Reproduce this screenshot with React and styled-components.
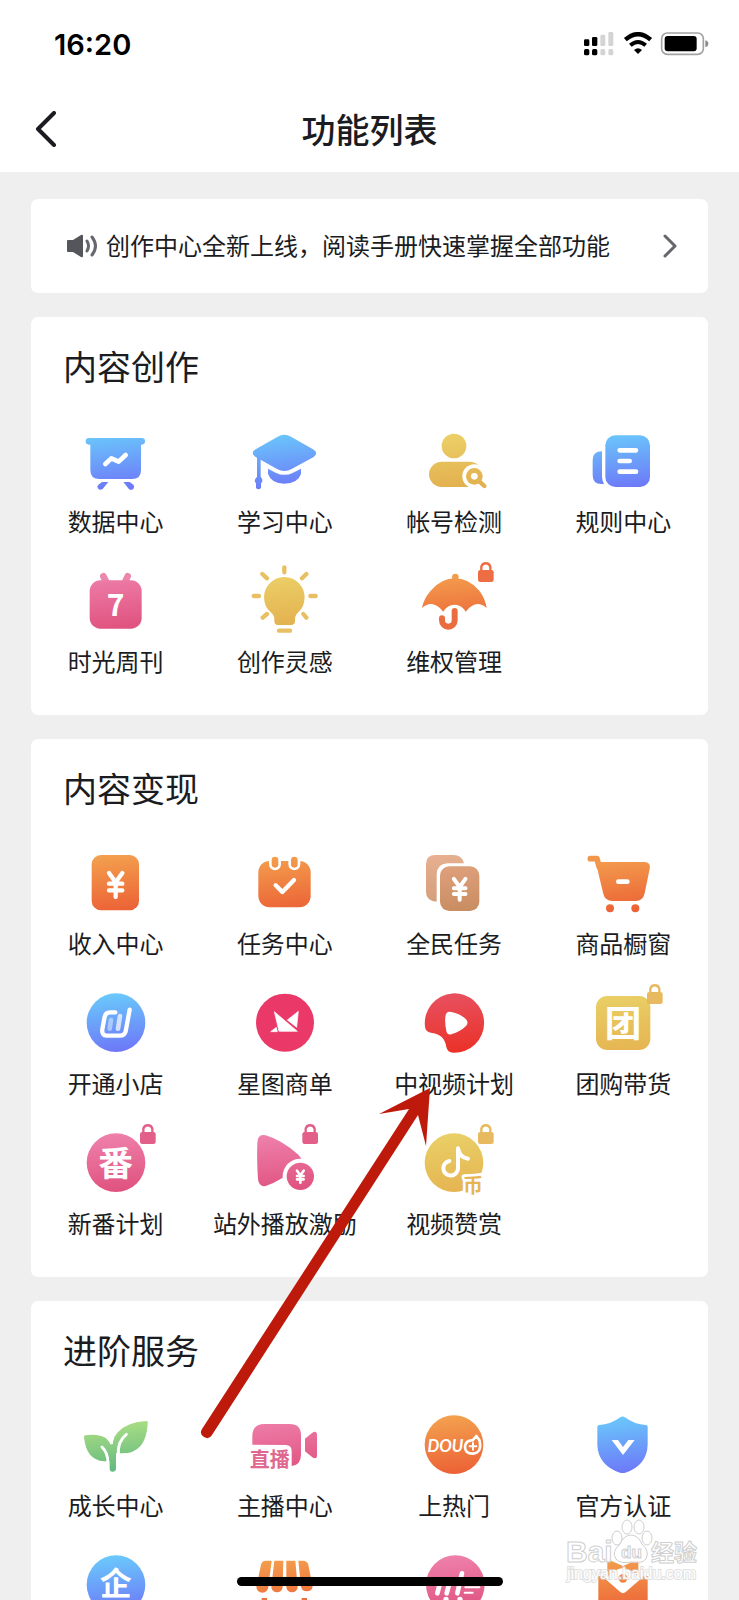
import React from 'react'
import styled, { createGlobalStyle } from 'styled-components'

const GlobalStyle = createGlobalStyle`
  * {
    box-sizing: border-box;
  }

  body {
    margin: 0;
    background-color: #efefef;
    color: #1b1c22;
    font-family: 'Noto Sans CJK SC', 'Noto Sans', sans-serif;
  }

  button {
    border: 0;
    padding: 0;
    background: none;
    color: inherit;
    font: inherit;
    cursor: pointer;
  }
`

const StyledScreen = styled.div`
  position: relative;
  display: flex;
  flex-direction: column;
  height: 100vh;
  overflow: hidden;
`

const StyledHeader = styled.header`
  flex: none;
  background-color: #ffffff;
`

const StyledStatusBar = styled.div`
  display: flex;
  align-items: center;
  justify-content: space-between;
  height: 88px;
  padding: 0 30px 0 54px;
`

const StyledTime = styled.time`
  color: #000000;
  font-family: Inter, 'Liberation Sans', sans-serif;
  font-size: 29px;
  font-weight: 600;
`

const StyledStatusIcons = styled.svg`
  width: 125px;
  height: 24px;
`

const StyledNav = styled.nav`
  display: grid;
  grid-template-columns: 60px 1fr 60px;
  align-items: center;
  height: 84px;
  padding: 0 30px 2px;
`

const StyledBack = styled.button`
  display: flex;
  padding-left: 4px;
`

const StyledPageTitle = styled.h1`
  margin: 0;
  font-size: 34px;
  font-weight: 500;
  line-height: 40px;
  text-align: center;
`

const StyledMain = styled.main`
  display: flex;
  flex: 1;
  flex-direction: column;
  gap: 24px;
  min-height: 0;
  padding: 27px 31px;
  overflow-y: auto;
  scrollbar-width: none;
`

const StyledNotice = styled.button`
  && {
    display: flex;
    flex: none;
    align-items: center;
    height: 94px;
    padding: 0 30px 0 35px;
    border-radius: 7px;
    background-color: #ffffff;
    font-size: 24px;
    text-align: left;
  }
`

const StyledNoticeText = styled.span`
  flex: 1;
  padding: 0 0 2px 8px;
  line-height: 32px;
  white-space: nowrap;
`

const StyledCard = styled.section`
  flex: none;
  padding: 29px 0 38px;
  border-radius: 7px;
  background-color: #ffffff;
`

const StyledCardTitle = styled.h2`
  margin: 0 0 38px;
  padding: 0 32px;
  font-size: 34px;
  font-weight: 400;
  line-height: 40px;
`

const StyledGrid = styled.div`
  display: grid;
  grid-template-columns: repeat(4, 1fr);
  row-gap: 27px;
`

const StyledEntry = styled.button`
  display: flex;
  flex-direction: column;
  align-items: center;
  gap: 9px;
`

const StyledIcon = styled.svg`
  width: 80px;
  height: 72px;
  overflow: visible;

  text {
    font-family: 'Noto Sans CJK SC', sans-serif;
    font-weight: 700;
    text-anchor: middle;
  }
`

const StyledLabel = styled.span`
  min-height: 32px;
  font-size: 24px;
  line-height: 32px;
  white-space: nowrap;
`

const StyledArrow = styled.svg`
  position: absolute;
  top: 1088px;
  left: 200px;
  width: 232px;
  height: 352px;
  pointer-events: none;
`

const StyledHomeBar = styled.div`
  position: absolute;
  bottom: 14px;
  left: 50%;
  width: 36%;
  height: 9px;
  border-radius: 5px;
  background-color: #000000;
  transform: translateX(-50%);
`

const StyledWatermark = styled.svg`
  position: absolute;
  right: 36px;
  bottom: 14px;
  width: 140px;
  height: 68px;
  pointer-events: none;
`

const colors = {
  blue: ['#6ac8fb', '#6d78f8'],
  yellow: ['#ecd068', '#e2b04e'],
  gold: ['#e9cf66', '#e6b552'],
  pink: ['#ee80aa', '#e0527f'],
  orange: ['#f3a04e', '#ec6236'],
  brown: ['#e3a582', '#c98d62'],
  green: ['#b4e385', '#5fb77f'],
  red: ['#e8505f', '#ea3229']
}

const stroke = (color, width) => ({
  fill: 'none',
  stroke: color,
  strokeWidth: width,
  strokeLinecap: 'round',
  strokeLinejoin: 'round'
})

const Gradients = () => (
  <svg width="0" height="0" style={{ position: 'absolute' }} aria-hidden="true">
    <defs>
      {Object.entries(colors).map(([name, [from, to]]) => (
        <linearGradient key={name} id={name} gradientUnits="userSpaceOnUse" x1="110" y1="25" x2="130" y2="195">
          <stop offset="0" stopColor={from} />
          <stop offset="1" stopColor={to} />
        </linearGradient>
      ))}
    </defs>
  </svg>
)

const Lock = ({ color, x = 192 }) => (
  <g opacity="0.92">
    <rect x={x} y="18" width="47" height="36" rx="7" fill={colors[color][1]} />
    <path d={`M${x + 10} 22 V8 a14 14 0 0 1 27 0 V22`} {...stroke(colors[color][1], 7)} />
  </g>
)

const Disc = ({ color, x = 120 }) => <circle cx={x} cy="110" r="88" fill={`url(#${color})`} />

const Yen = ({ x, y, size, width }) => (
  <path
    d={`M${x - size * 5} ${y - size * 9} L${x} ${y - size * 2} L${x + size * 5} ${y - size * 9} M${x} ${y - size * 2} V${y + size * 9} M${x - size * 5} ${y - size} H${x + size * 5} M${x - size * 5} ${y + size * 4} H${x + size * 5}`}
    {...stroke('#fff', width)}
  />
)

const icons = {
  board: (
    <g fill="url(#blue)">
      <rect x="29" y="42" width="178" height="20" rx="10" />
      <path d="M43 48 H195 V138 Q195 165 168 165 H70 Q43 165 43 138 Z" />
      <path d="M78 174 H97 L80 195 Q70 201 65 192 Q62 187 67 182 Z" />
      <path d="M142 174 H161 L172 182 Q177 187 172 194 Q166 201 158 194 Z" />
      <path d="M88 120 L106 103 L128 113 L149 93" {...stroke('#fff', 14)} />
    </g>
  ),
  cap: (
    <g fill="url(#blue)">
      <path d="M32 76 L98 38 Q118 27 138 38 L204 76 Q222 87 206 99 L140 135 Q118 147 96 135 L32 99 Q14 87 32 76 Z" />
      <path d="M69 134 L92 146 Q118 159 144 146 L168 134 V150 Q158 179 118 179 Q79 179 69 150 Z" />
      <path d="M36 94 H47 V158 Q57 170 48 178 V192 Q40 200 33 192 V178 Q24 170 36 158 Z" />
    </g>
  ),
  account: (
    <g fill="url(#yellow)">
      <circle cx="120" cy="66" r="37" />
      <rect x="45" y="113" width="160" height="76" rx="38" />
      <circle cx="181" cy="157" r="36" fill="#fff" />
      <rect x="181" y="157" width="40" height="36" fill="#fff" />
      <path d="M196 172 L211 186" {...stroke('#e2b04e', 13)} />
      <circle cx="181" cy="157" r="25" />
      <circle cx="181" cy="157" r="10" fill="#fff" />
    </g>
  ),
  rules: (
    <g fill="url(#blue)">
      <path d="M57 82 V158 Q58 172 63 180 H55 Q29 180 29 154 V108 Q29 82 57 82 Z" />
      <rect x="67" y="34" width="134" height="155" rx="30" />
      <path d="M110 79 H159 M110 111 H140 M110 143 H159" {...stroke('#fff', 14)} />
    </g>
  ),
  weekly: (
    <g fill="url(#pink)">
      <path d="M82 37 L92 56 M155 37 L146 56" {...stroke('#ea87ad', 20)} />
      <rect x="41" y="49" width="156" height="145" rx="32" />
      <text x="119" y="156" fontSize="90" fill="#fff">7</text>
    </g>
  ),
  bulb: (
    <g fill="url(#yellow)">
      <path d="M57 100 A61 61 0 1 1 179 100 Q178 130 160 145 Q150 154 150 166 V172 Q150 183 138 183 H99 Q88 183 88 172 V166 Q88 154 77 145 Q58 130 57 100 Z" />
      <path
        d="M102 200 H135 M118 10 V25 M52 30 L66 43 M184 30 L171 43 M26 96 H42 M196 96 H212 M66 150 L53 161 M175 150 L184 161"
        {...stroke('#e8c063', 13)}
      />
    </g>
  ),
  umbrella: (
    <g fill="url(#orange)">
      <circle cx="124" cy="39" r="10" />
      <path d="M24 132 Q29 104 50 80 Q82 43 123 43 Q164 43 196 80 Q214 104 218 132 Q186 104 155 143 Q143 122 122 122 Q100 122 88 143 Q56 104 24 132 Z" />
      <path d="M122 137 V169 A19 19 0 0 1 84 169 V163" {...stroke('#fff', 28)} />
      <path d="M122 141 V169 A19 19 0 0 1 84 169 V163" {...stroke('#ea6d40', 18)} />
      <Lock color="orange" />
    </g>
  ),
  income: (
    <g fill="url(#orange)">
      <rect x="47" y="27" width="142" height="166" rx="28" />
      <Yen x={119} y={117} size={4} width={13} />
    </g>
  ),
  task: (
    <g fill="url(#orange)">
      <rect x="40" y="45" width="157" height="139" rx="34" />
      <rect x="76" y="28" width="28" height="41" rx="14" stroke="#fff" strokeWidth="8" />
      <rect x="134" y="28" width="28" height="41" rx="14" stroke="#fff" strokeWidth="8" />
      <path d="M92 118 L112 138 L147 102" {...stroke('#fff', 13)} />
    </g>
  ),
  tasks: (
    <g fill="url(#brown)">
      <path d="M64 27 H118 Q144 27 150 52 H100 Q68 54 68 86 V167 Q36 164 36 137 V55 Q36 27 64 27 Z" opacity="0.88" />
      <rect x="78" y="61" width="118" height="134" rx="28" />
      <Yen x={137} y={130} size={3.5} width={12} />
    </g>
  ),
  cart: (
    <g fill="url(#orange)">
      <path d="M22 38 H42 L48 62" {...stroke('#f2964b', 17)} />
      <path d="M46 48 H184 Q204 48 200 68 L185 142 Q180 165 158 165 H89 Q66 165 61 144 L40 56 Z" />
      <path d="M106 107 H133" {...stroke('#fff', 14)} />
      <circle cx="81" cy="187" r="12" />
      <circle cx="157" cy="187" r="12" />
    </g>
  ),
  shop: (
    <g>
      <Disc color="blue" />
      <path d="M118 79 H101 Q89 79 86 92 L79 130 Q77 148 92 149 H132 Q146 149 149 136 L161 71" {...stroke('#fff', 13)} />
      <path d="M105 102 L101 128" {...stroke('#fff', 14)} opacity="0.45" />
      <path d="M132 90 L126 128" {...stroke('#fff', 14)} opacity="0.7" />
    </g>
  ),
  star: (
    <g fill="#fff" stroke="#fff" strokeWidth="2" strokeLinejoin="round">
      <circle cx="120" cy="110" r="87" fill="#ea3968" stroke="none" />
      <path d="M88 77 L157 136 H102 Z" />
      <path d="M77 137 L94 124 L97 137 Z" />
      <path d="M160 76 L155 124 L127 102 Z" />
    </g>
  ),
  video: (
    <g fill="url(#red)">
      <path d="M33 122 A89 89 0 1 1 118 200 Q100 200 97 183 Q92 146 54 141 Q34 138 33 122 Z" />
      <path d="M94 92 Q96 74 112 78 Q140 84 156 100 Q165 110 156 120 Q140 136 112 145 Q100 148 97 135 Q92 112 94 92 Z" fill="#fff" />
    </g>
  ),
  group: (
    <g fill="url(#gold)">
      <rect x="39" y="30" width="163" height="162" rx="34" />
      <text x="120" y="153" fontSize="110" fill="#fff">团</text>
      <Lock color="gold" />
    </g>
  ),
  anime: (
    <g>
      <Disc color="pink" />
      <text x="119" y="149" fontSize="104" fill="#fff">番</text>
      <Lock color="pink" />
    </g>
  ),
  playback: (
    <g fill="url(#pink)">
      <path d="M37 50 Q38 22 62 28 Q110 42 160 86 Q178 104 162 118 Q110 165 62 180 Q42 184 39 160 Q35 100 37 50 Z" />
      <circle cx="166" cy="151" r="53" fill="#fff" />
      <circle cx="166" cy="151" r="41" />
      <Yen x={166} y={152} size={2} width={8} />
      <Lock color="pink" x={172} />
    </g>
  ),
  reward: (
    <g>
      <Disc color="gold" />
      <path d="M132 67 V126 A22 22 0 1 1 106 105 M132 67 Q136 94 162 98" {...stroke('#fff', 12)} />
      <text x="177" y="202" fontSize="60" fill="#e6b552" stroke="#fff" strokeWidth="16" strokeLinejoin="round" paintOrder="stroke">
        币
      </text>
      <Lock color="gold" />
    </g>
  ),
  sprout: (
    <g fill="url(#green)">
      <path d="M211 39 Q217 39 215 47 Q210 137 137 136 H116 Q102 98 124 74 Q154 41 211 39 Z" />
      <path d="M28 82 Q92 74 104 112 L104 160 H84 Q30 156 24 87 Q23 82 28 82 Z" />
      <path d="M78 117 Q96 134 96 166" {...stroke('#fff', 9)} />
      <path d="M127 142 Q124 100 151 79" {...stroke('#fff', 9)} />
      <path d="M100 112 Q112 104 120 112 V182 Q119 191 110 191 Q101 191 101 182 Z" />
    </g>
  ),
  live: (
    <g fill="url(#pink)">
      <path d="M22 110 V84 Q22 48 58 48 H134 Q168 48 168 82 V140 Q168 170 140 174 V130 Q140 111 122 111 Z" />
      <path d="M180 92 L202 74 Q216 66 216 82 V142 Q216 156 202 148 L180 130 Z" />
      <text x="74" y="178" fontSize="60" fill="#df6790">直播</text>
    </g>
  ),
  dou: (
    <g>
      <Disc color="orange" />
      <text
        x="94"
        y="132"
        fontSize="50"
        fill="#fff"
        style={{ fontFamily: 'Lato, sans-serif', fontStyle: 'italic' }}
      >
        DOU
      </text>
      <path d="M187 84 L196 96 Q206 134 176 137 Q152 136 153 115 Q156 96 176 97 Z" {...stroke('#fff', 8)} />
      <path d="M167 115 H187 M177 105 V125" {...stroke('#fff', 6)} />
    </g>
  ),
  shield: (
    <g fill="url(#blue)">
      <path d="M112 28 Q119 23 126 28 Q155 50 189 51 Q194 51 194 57 V110 Q192 172 127 194 Q119 196 111 194 Q45 172 43 110 V57 Q43 51 49 51 Q82 50 112 28 Z" />
      <path d="M86 96 H105 L120 117 L136 96 H155 L120 141 Z" fill="#fff" />
    </g>
  ),
  company: (
    <g>
      <Disc color="blue" />
      <text x="119" y="141" fontSize="96" fill="#fff">企</text>
    </g>
  ),
  store: (
    <g fill="url(#orange)">
      <path d="M62 38 H80 L70 116 A18 18 0 0 1 34 116 L48 50 Q51 38 62 38 Z" />
      <path d="M88 38 H115 L113 116 A17 17 0 0 1 79 116 Z" />
      <path d="M124 38 H151 L158 116 A17 17 0 0 1 124 116 Z" />
      <path d="M160 38 H174 Q186 38 190 50 L203 116 A18 18 0 0 1 168 116 Z" />
      <path d="M50 150 H66 V192 H170 V150 H186 V205 H50 Z" />
    </g>
  ),
  chart: (
    <g>
      <Disc color="pink" x={124} />
      <path d="M80 98 L70 136 M108 98 L98 136 M144 76 L130 136" {...stroke('#fff', 14)} />
      <path d="M154 118 H196 M152 134 H176" {...stroke('#fff', 6)} />
      <circle cx="96" cy="154" r="8" fill="#fff" />
      <circle cx="138" cy="154" r="8" fill="#fff" />
    </g>
  ),
  envelope: (
    <g fill="url(#orange)">
      <path d="M73 38 H84 L120 54 L156 38 H166 V100 H73 Z" />
      <path d="M46 84 L60 84 L120 130 L180 84 L194 84 V205 H46 Z" />
      <path d="M76 84 Q98 62 120 60 Q142 62 164 84 L172 94 L128 132 Q120 139 112 132 L68 94 Z" fill="#fff" />
      <circle cx="120" cy="91" r="13" />
    </g>
  )
}

const sections = [
  {
    title: '内容创作',
    entries: [
      ['board', '数据中心'],
      ['cap', '学习中心'],
      ['account', '帐号检测'],
      ['rules', '规则中心'],
      ['weekly', '时光周刊'],
      ['bulb', '创作灵感'],
      ['umbrella', '维权管理']
    ]
  },
  {
    title: '内容变现',
    entries: [
      ['income', '收入中心'],
      ['task', '任务中心'],
      ['tasks', '全民任务'],
      ['cart', '商品橱窗'],
      ['shop', '开通小店'],
      ['star', '星图商单'],
      ['video', '中视频计划'],
      ['group', '团购带货'],
      ['anime', '新番计划'],
      ['playback', '站外播放激励'],
      ['reward', '视频赞赏']
    ]
  },
  {
    title: '进阶服务',
    entries: [
      ['sprout', '成长中心'],
      ['live', '主播中心'],
      ['dou', '上热门'],
      ['shield', '官方认证'],
      ['company', ''],
      ['store', ''],
      ['chart', ''],
      ['envelope', '']
    ]
  }
]

const StatusIcons = () => (
  <StyledStatusIcons viewBox="0 0 375 72">
    <rect x="0" y="22" width="16" height="20" rx="4" />
    <rect x="24" y="15" width="16" height="27" rx="4" />
    <rect x="49" y="8" width="15" height="34" rx="4" fill="#d4d4d4" />
    <rect x="73" y="0" width="15" height="42" rx="4" fill="#d4d4d4" />
    <rect x="0" y="51" width="16" height="19" rx="5" />
    <rect x="24" y="51" width="16" height="19" rx="5" />
    <rect x="49" y="51" width="15" height="19" rx="5" fill="#d4d4d4" />
    <rect x="73" y="51" width="15" height="19" rx="5" fill="#d4d4d4" />
    <path d="M124 23 Q162 -10 200 23" fill="none" stroke="#000" strokeWidth="13" />
    <path d="M139 40 Q162 20 185 40" fill="none" stroke="#000" strokeWidth="12" />
    <path d="M150 54 Q162 44 174 54 L162 66 Z" />
    <rect x="233" y="3" width="125" height="64" rx="17" fill="none" stroke="#a3a3a3" strokeWidth="5" />
    <rect x="242" y="12" width="96" height="46" rx="9" />
    <path d="M364 25 Q373 27 373 35 Q373 43 364 45 Z" fill="#8c8c8c" />
  </StyledStatusIcons>
)

const Section = ({ title, entries }) => (
  <StyledCard>
    <StyledCardTitle>{title}</StyledCardTitle>
    <StyledGrid>
      {entries.map(([icon, label]) => (
        <StyledEntry key={icon} type="button">
          <StyledIcon viewBox="0 0 240 216" aria-hidden="true">{icons[icon]}</StyledIcon>
          <StyledLabel>{label}</StyledLabel>
        </StyledEntry>
      ))}
    </StyledGrid>
  </StyledCard>
)

const Arrow = () => (
  <StyledArrow viewBox="0 0 232 352" aria-hidden="true">
    <path
      d="M230 0 L179 26 L209 21 L2 341 Q-1 346 4 349 Q9 352 12 347 L218 27 L226 58 Z"
      fill="#be1a0b"
    />
  </StyledArrow>
)

const Watermark = () => (
  <StyledWatermark viewBox="0 0 140 68" aria-hidden="true">
    <g fill="#fff" fillOpacity="0.8" stroke="#cfcfcf" strokeWidth="1">
      <ellipse cx="54" cy="20" rx="5" ry="7" />
      <ellipse cx="64" cy="9" rx="5" ry="7" />
      <ellipse cx="76" cy="9" rx="5" ry="7" />
      <ellipse cx="84" cy="20" rx="5" ry="7" />
      <path d="M68 17 Q75 17 79 26 Q87 33 83 41 Q79 46 68 44 Q57 46 53 41 Q48 34 57 26 Q61 17 68 17 Z" />
      <text x="3" y="44" fontSize="30" fontWeight="700" fontFamily="Liberation Sans, sans-serif">Bai</text>
      <text x="58" y="40" fontSize="17" fontWeight="700" fontFamily="Liberation Sans, sans-serif">du</text>
      <text x="88" y="43" fontSize="23" fontWeight="700" fontFamily="Noto Sans CJK SC, sans-serif">经验</text>
    </g>
    <text
      x="4"
      y="61"
      fontSize="16"
      fontFamily="Liberation Sans, sans-serif"
      fill="#fff"
      stroke="#d4d4d4"
      strokeWidth="2"
      strokeOpacity="0.7"
      paintOrder="stroke"
    >
      jingyan.baidu.com
    </text>
  </StyledWatermark>
)

const App = () => (
  <StyledScreen>
    <GlobalStyle />
    <Gradients />
    <StyledHeader>
      <StyledStatusBar>
        <StyledTime>16:20</StyledTime>
        <StatusIcons />
      </StyledStatusBar>
      <StyledNav>
        <StyledBack type="button">
          <svg width="24" height="36" viewBox="0 0 24 36">
            <path d="M20 2 L4 18 L20 34" {...stroke('#1b1c22', 4)} />
          </svg>
        </StyledBack>
        <StyledPageTitle>功能列表</StyledPageTitle>
      </StyledNav>
    </StyledHeader>
    <StyledMain>
      <StyledNotice type="button">
        <svg width="32" height="24" viewBox="0 0 32 24">
          <path d="M1 7 Q1 6 2 6 H7 L15 1 Q17 0 17 2 V22 Q17 24 15 23 L7 18 H2 Q1 18 1 17 Z" fill="#55565b" />
          <path d="M21 7 Q24 12 21 17 M26 3 Q33 12 26 21" {...stroke('#66676c', 3)} />
        </svg>
        <StyledNoticeText>创作中心全新上线，阅读手册快速掌握全部功能</StyledNoticeText>
        <svg width="16" height="24" viewBox="0 0 16 24">
          <path d="M3 2 L13 12 L3 22" {...stroke('#66676c', 3)} />
        </svg>
      </StyledNotice>
      {sections.map(section => <Section key={section.title} {...section} />)}
    </StyledMain>
    <StyledHomeBar />
    <Watermark />
    <Arrow />
  </StyledScreen>
)

export default App
